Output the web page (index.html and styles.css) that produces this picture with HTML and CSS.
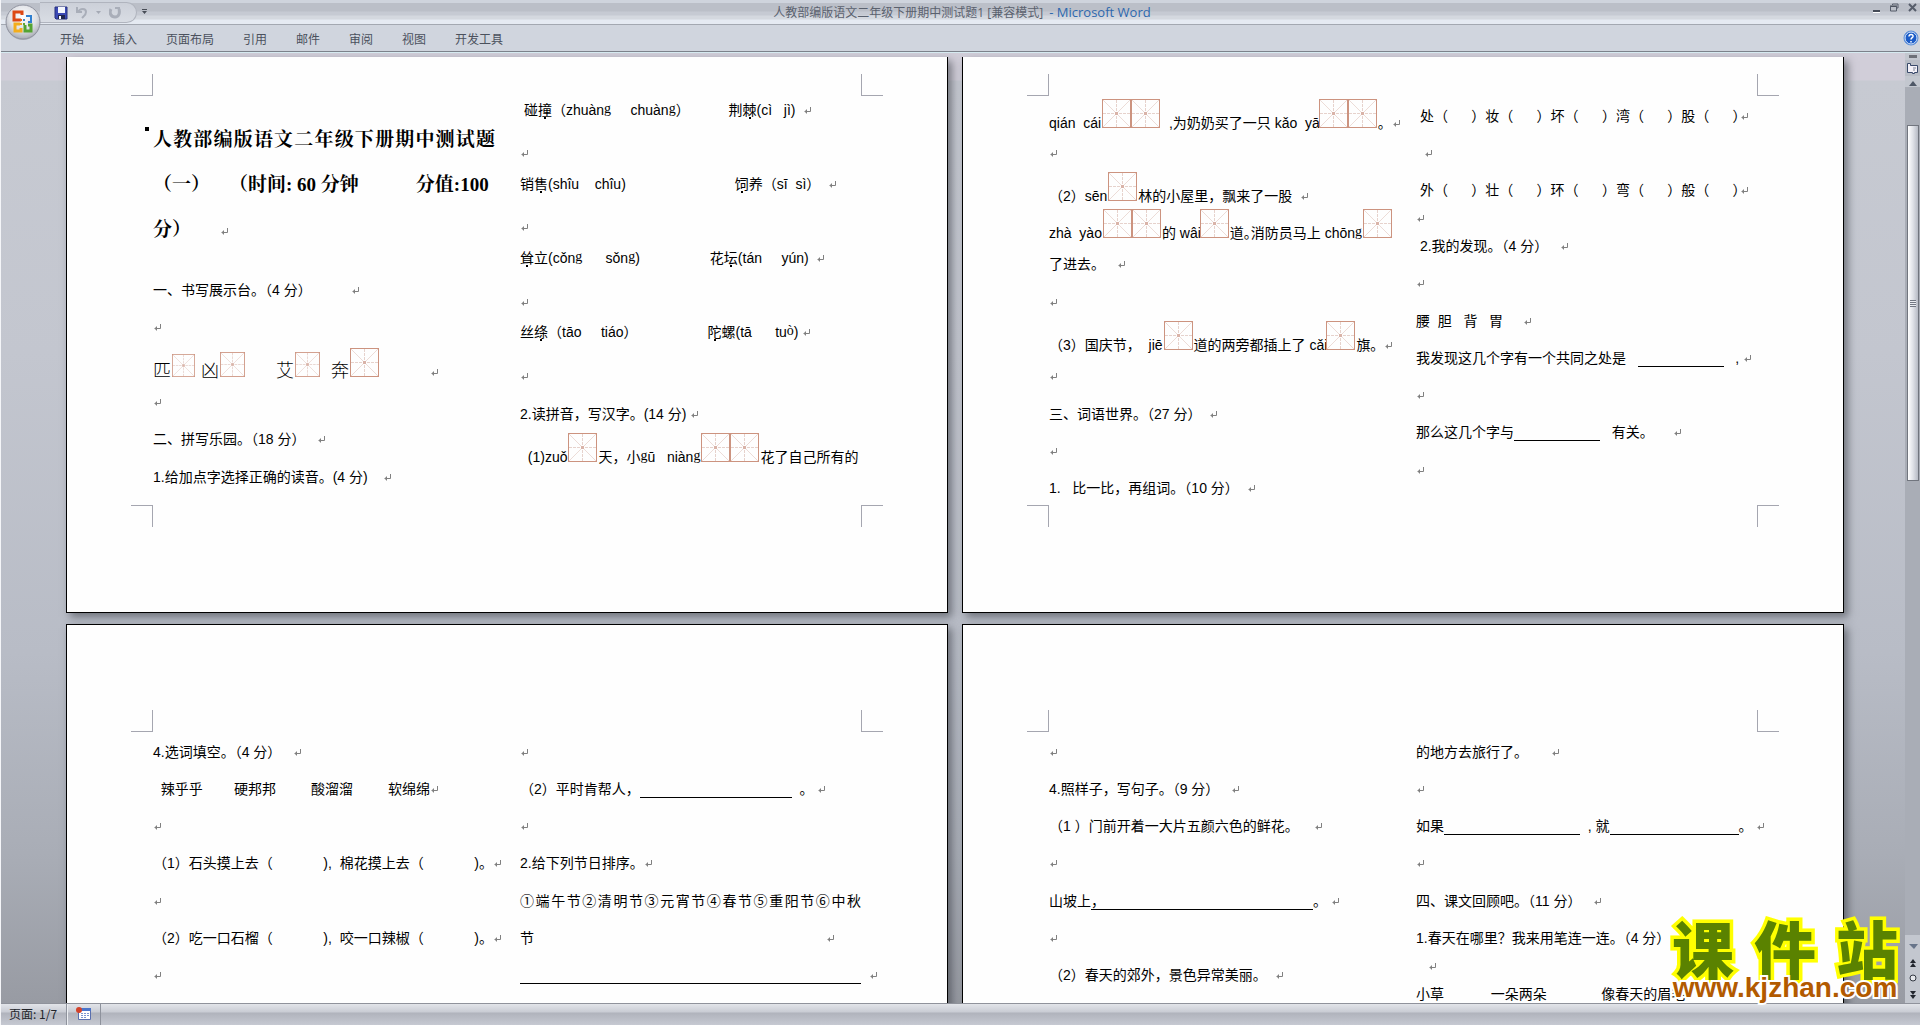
FILE: index.html
```html
<!DOCTYPE html>
<html lang="zh-CN">
<head>
<meta charset="utf-8">
<title>人教部编版语文二年级下册期中测试题1 [兼容模式] - Microsoft Word</title>
<link rel="stylesheet" href="styles.css">
</head>
<body>
<svg class="defs" aria-hidden="true">
  <symbol id="cr" viewBox="0 0 8 8"><path d="M7.500 0V4.500H1.500M3.500 2.500V6.500M2.500 3.500V5.500" fill="none" stroke="#808080"/></symbol>
  <symbol id="box" viewBox="0 0 29 29">
    <path d="M1 1L28 28M28 1L1 28" stroke="#ecdcd7" fill="none"/>
    <path d="M14.500 1V28M1 14.500H28" stroke="#e6d2cc" fill="none" stroke-dasharray="3 1"/>
    <rect x="13" y="13" width="3" height="3" fill="#d9b3a8"/>
    <rect x=".5" y=".5" width="28" height="28" fill="none" stroke="#cc937f"/>
  </symbol>
</svg>

<header class="titlebar">
  <div class="quick">
    <button class="q" aria-label="保存"><svg width="14" height="14" viewBox="0 0 14 14"><path d="M1 1h12v12H2l-1-1z" fill="#3b49b5" stroke="#27307f"/><path d="M4 1h7v6H4z" fill="#f3f6fd"/><path d="M4 9h7v4H4z" fill="#20264f"/><path d="M5 10h2v3H5z" fill="#fff"/></svg></button>
    <button class="q" aria-label="撤消"><svg width="12" height="12" viewBox="0 0 12 12"><path d="M1 0v5h5" fill="none" stroke="#a9aeb9" stroke-width="2"/><path d="M2 5c2-4 8-4 8 0 0 3-2 4-4 6" fill="none" stroke="#a9aeb9" stroke-width="2"/></svg></button>
    <button class="q small" aria-label="撤消列表"><svg width="5" height="3"><path d="M0 0h5L2.500 3z" fill="#a4a9b4"/></svg></button>
    <button class="q" aria-label="恢复"><svg width="12" height="12" viewBox="0 0 12 12"><path d="M2 2c-2 4 0 8 4 8s5-4 4-8" fill="none" stroke="#a9aeb9" stroke-width="3"/><path d="M6 0h5v5H9V2H6z" fill="#a9aeb9"/></svg></button>
  </div>
  <button class="q more" aria-label="自定义快速访问工具栏"><svg width="5" height="6"><path d="M0 0h5v1H0zM0 2h5L2.500 5z" fill="#484d57"/></svg></button>
  <div class="caption">人教部编版语文二年级下册期中测试题1 [兼容模式] <span class="app">- Microsoft Word</span></div>
  <div class="winbtns">
    <button class="q" aria-label="最小化"><svg width="8" height="10"><path d="M0 7h7v2H0z" fill="#454b57"/><path d="M0 9h7v1H0z" fill="#fff"/></svg></button>
    <button class="q" aria-label="还原"><svg width="9" height="10"><path d="M2.500 2V1H8v4H7M1 3.500h5.500V8H.5V3.500z" fill="none" stroke="#565d6b"/><path d="M0 3h7" stroke="#454b57"/></svg></button>
    <button class="q" aria-label="关闭"><svg width="10" height="10"><path d="M1 1l7 7M8 1L1 8" stroke="#565d6b" stroke-width="2"/></svg></button>
  </div>
  <button class="orb" aria-label="Office 按钮">
    <svg width="38" height="38" viewBox="0 0 38 38">
      <defs><radialGradient id="og" cx=".5" cy=".35" r=".65"><stop offset="0" stop-color="#fff"/><stop offset=".6" stop-color="#dfe1e6"/><stop offset="1" stop-color="#a9acb4"/></radialGradient></defs>
      <circle cx="19" cy="20" r="17" fill="#9699a1" opacity=".6"/>
      <circle cx="19" cy="19" r="17" fill="url(#og)" stroke="#9093a0"/>
      <g fill="none" stroke-width="3">
        <path d="M17 17h-7V9h8v3" stroke="#dd4814"/>
        <path d="M22 13h5v6h-3" stroke="#2f7fd0" stroke-width="2"/>
        <path d="M16 21h-5v7h6v-3" stroke="#f3ad1c"/>
        <path d="M21 22v6h6v-6h-3" stroke="#54a432"/>
      </g>
      <g fill="#e8631a"><rect x="16" y="16" width="2" height="2"/><rect x="19" y="16" width="2" height="2" fill="#3f88cf"/><rect x="16" y="20" width="2" height="2" fill="#e9a920"/><rect x="19" y="20" width="2" height="2" fill="#5fa53a"/></g>
    </svg>
  </button>
</header>

<nav class="tabs">
  <button>开始</button><button>插入</button><button>页面布局</button><button>引用</button><button>邮件</button><button>审阅</button><button>视图</button><button>开发工具</button>
  <button class="help" aria-label="帮助"><svg width="16" height="16" viewBox="0 0 16 16"><circle cx="8" cy="8" r="7" fill="#1c5cc7" stroke="#5b8fd9"/><circle cx="8" cy="8" r="6" fill="none" stroke="#dbe9fb"/><path d="M6 6.500c0-3 4.500-2.500 4 0-.3 1.200-2 1.200-2 3M8 11v1.500" fill="none" stroke="#fff" stroke-width="1.500"/></svg></button>
</nav>

<div class="work">
  <main class="desk">
    <article class="page first">
      <i class="crop tl"></i><i class="crop tr"></i><i class="crop bl"></i><i class="crop br"></i>
      <section>
        <h1><span class="fill">人教部编版语文二年级下册期中测试题</span><span>（一）    （时间: 60 分钟            分值:100</span><span>分）      <svg class="cr"><use href="#cr"/></svg></span></h1>
        <p class="h47"><span>一、书写展示台。（4 分）          <svg class="cr"><use href="#cr"/></svg></span></p>
        <p class="h37"><span><svg class="cr"><use href="#cr"/></svg></span></p>
        <p class="h44 big"><span>匹<svg class="box b23"><use href="#box"/></svg> 凶<svg class="box b25"><use href="#box"/></svg>      艾<svg class="box b25"><use href="#box"/></svg>  奔<svg class="box"><use href="#box"/></svg>          <svg class="cr"><use href="#cr"/></svg></span></p>
        <p class="h31"><span><svg class="cr"><use href="#cr"/></svg></span></p>
        <p class="h37"><span>二、拼写乐园。（18 分）   <svg class="cr"><use href="#cr"/></svg></span></p>
        <p class="h38"><span>1.给加点字选择正确的读音。(4 分)    <svg class="cr"><use href="#cr"/></svg></span></p>
      </section>
      <section>
        <p class="h24"><span> 碰<em>撞</em>（zhuàn<b>g</b>     chuàn<b>g</b>）          荆<em>棘</em>(cì   jì)  <svg class="cr"><use href="#cr"/></svg></span></p>
        <p class="h43"><span><svg class="cr"><use href="#cr"/></svg></span></p>
        <p class="h31"><span>销<em>售</em>(shîu    chîu)                            <em>饲</em>养（sī  sì）  <svg class="cr"><use href="#cr"/></svg></span></p>
        <p class="h43"><span><svg class="cr"><use href="#cr"/></svg></span></p>
        <p class="h31"><span><em>耸</em>立(cǒn<b>g</b>      sǒn<b>g</b>)                  花<em>坛</em>(tán     yún)  <svg class="cr"><use href="#cr"/></svg></span></p>
        <p class="h44"><span><svg class="cr"><use href="#cr"/></svg></span></p>
        <p class="h30"><span>丝<em>绦</em>（tāo     tiáo）                  <em>陀</em>螺(tā      tu<b>ò</b>) <svg class="cr"><use href="#cr"/></svg></span></p>
        <p class="h44"><span><svg class="cr"><use href="#cr"/></svg></span></p>
        <p class="h38"><span>2.读拼音，写汉字。(14 分) <svg class="cr"><use href="#cr"/></svg></span></p>
        <p class="h43"><span>  (1)zuǒ<svg class="box"><use href="#box"/></svg>天，小<b>g</b>ū   niàn<b>g</b><svg class="box"><use href="#box"/></svg><svg class="box"><use href="#box"/></svg>花了自己所有的</span></p>
      </section>
    </article>

    <article class="page first">
      <i class="crop tl"></i><i class="crop tr"></i><i class="crop bl"></i><i class="crop br"></i>
      <section>
        <p class="h37"><span>qián  cái<svg class="box"><use href="#box"/></svg><svg class="box"><use href="#box"/></svg>  ,为奶奶买了一只 kǎo  yā<svg class="box"><use href="#box"/></svg><svg class="box"><use href="#box"/></svg>。<svg class="cr"><use href="#cr"/></svg></span></p>
        <p class="h30"><span><svg class="cr"><use href="#cr"/></svg></span></p>
        <p class="h43"><span>（2）sēn<svg class="box"><use href="#box"/></svg>林的小屋里，飘来了一股  <svg class="cr"><use href="#cr"/></svg></span></p>
        <p class="h37"><span>zhà  yào<svg class="box"><use href="#box"/></svg><svg class="box"><use href="#box"/></svg>的 wâi<svg class="box"><use href="#box"/></svg>道<span class="tight">。</span>消防员马上 chōn<b>g</b><svg class="box"><use href="#box"/></svg></span></p>
        <p class="h31"><span>了进去。   <svg class="cr"><use href="#cr"/></svg></span></p>
        <p class="h38"><span><svg class="cr"><use href="#cr"/></svg></span></p>
        <p class="h43"><span>（3）国庆节，  jiē<svg class="box"><use href="#box"/></svg>道的两旁都插上了 cǎi<svg class="box"><use href="#box"/></svg>旗。<svg class="cr"><use href="#cr"/></svg></span></p>
        <p class="h31"><span><svg class="cr"><use href="#cr"/></svg></span></p>
        <p class="h38"><span>三、词语世界。（27 分）  <svg class="cr"><use href="#cr"/></svg></span></p>
        <p class="h37"><span><svg class="cr"><use href="#cr"/></svg></span></p>
        <p class="h37"><span>1.   比一比，再组词。（10 分）  <svg class="cr"><use href="#cr"/></svg></span></p>
      </section>
      <section>
        <p class="h30"><span> 处（      ）妆（      ）坏（      ）湾（      ）股（      <span class="tight">）</span><svg class="cr"><use href="#cr"/></svg></span></p>
        <p class="h37"><span>  <svg class="cr"><use href="#cr"/></svg></span></p>
        <p class="h37"><span> 外（      ）壮（      ）环（      ）弯（      ）般（      <span class="tight">）</span><svg class="cr"><use href="#cr"/></svg></span></p>
        <p class="h28"><span><svg class="cr"><use href="#cr"/></svg></span></p>
        <p class="h28"><span> 2.我的发现。（4 分）   <svg class="cr"><use href="#cr"/></svg></span></p>
        <p class="h37"><span><svg class="cr"><use href="#cr"/></svg></span></p>
        <p class="h38"><span>腰  胆   背   胃     <svg class="cr"><use href="#cr"/></svg></span></p>
        <p class="h37"><span>我发现这几个字有一个共同之处是   <span class="blank w86"></span>   , <svg class="cr"><use href="#cr"/></svg></span></p>
        <p class="h37"><span><svg class="cr"><use href="#cr"/></svg></span></p>
        <p class="h37"><span>那么这几个字与<span class="blank w86"></span>   有关。     <svg class="cr"><use href="#cr"/></svg></span></p>
        <p class="h38"><span><svg class="cr"><use href="#cr"/></svg></span></p>
      </section>
    </article>

    <article class="page">
      <i class="crop tl"></i><i class="crop tr"></i><i class="crop bl"></i><i class="crop br"></i>
      <section>
        <p class="h30"><span>4.选词填空。（4 分）   <svg class="cr"><use href="#cr"/></svg></span></p>
        <p class="h37"><span>  辣乎乎        硬邦邦         酸溜溜         软绵绵<svg class="cr"><use href="#cr"/></svg></span></p>
        <p class="h37"><span><svg class="cr"><use href="#cr"/></svg></span></p>
        <p class="h37"><span>（1）石头摸上去（             ),  棉花摸上去（             )。<svg class="cr"><use href="#cr"/></svg></span></p>
        <p class="h38"><span><svg class="cr"><use href="#cr"/></svg></span></p>
        <p class="h37"><span>（2）吃一口石榴（             ),  咬一口辣椒（             )。<svg class="cr"><use href="#cr"/></svg></span></p>
        <p class="h37"><span><svg class="cr"><use href="#cr"/></svg></span></p>
      </section>
      <section>
        <p class="h30"><span><svg class="cr"><use href="#cr"/></svg></span></p>
        <p class="h37"><span>（2）平时肯帮人，<span class="blank w152"></span>  。 <svg class="cr"><use href="#cr"/></svg></span></p>
        <p class="h37"><span><svg class="cr"><use href="#cr"/></svg></span></p>
        <p class="h37"><span>2.给下列节日排序。<svg class="cr"><use href="#cr"/></svg></span></p>
        <p class="h38"><span class="fill">①端午节②清明节③元宵节④春节⑤重阳节⑥中秋</span></p>
        <p class="h37"><span>节                                                                           <svg class="cr"><use href="#cr"/></svg></span></p>
        <p class="h37"><span><span class="blank w341"></span>  <svg class="cr"><use href="#cr"/></svg></span></p>
      </section>
    </article>

    <article class="page">
      <i class="crop tl"></i><i class="crop tr"></i><i class="crop bl"></i><i class="crop br"></i>
      <section>
        <p class="h30"><span><svg class="cr"><use href="#cr"/></svg></span></p>
        <p class="h37"><span>4.照样子，写句子。（9 分）   <svg class="cr"><use href="#cr"/></svg></span></p>
        <p class="h37"><span>（1 ）门前开着一大片五颜六色的鲜花。    <svg class="cr"><use href="#cr"/></svg></span></p>
        <p class="h37"><span><svg class="cr"><use href="#cr"/></svg></span></p>
        <p class="h38"><span>山坡上<span class="blank w222">，</span>。 <svg class="cr"><use href="#cr"/></svg></span></p>
        <p class="h37"><span><svg class="cr"><use href="#cr"/></svg></span></p>
        <p class="h37"><span>（2）春天的郊外，景色异常美丽。  <svg class="cr"><use href="#cr"/></svg></span></p>
      </section>
      <section>
        <p class="h30"><span>的地方去旅行了。      <svg class="cr"><use href="#cr"/></svg></span></p>
        <p class="h37"><span><svg class="cr"><use href="#cr"/></svg></span></p>
        <p class="h37"><span>如果<span class="blank w136"></span>  , 就<span class="blank w129"></span>。 <svg class="cr"><use href="#cr"/></svg></span></p>
        <p class="h37"><span><svg class="cr"><use href="#cr"/></svg></span></p>
        <p class="h38"><span>四、课文回顾吧。（11 分）   <svg class="cr"><use href="#cr"/></svg></span></p>
        <p class="h37"><span>1.春天在哪里？我来用笔连一连。（4 分）</span></p>
        <p class="h28"><span>   <svg class="cr"><use href="#cr"/></svg></span></p>
        <p class="h28"><span>小草            一朵两朵              像春天的眉毛</span></p>
      </section>
    </article>
  </main>

  <aside class="scroll">
    <svg class="top" width="15" height="34" viewBox="0 0 15 34">
      <rect x="4" y="2" width="8" height="3" fill="#6d7078"/>
      <path d="M0 7h15v16H0z" fill="#b9bdc6"/>
      <path d="M2.500 10.500h3v2h7v7h-3v1h-2v-1h-5z" fill="#f4f1f8" stroke="#39496a"/><path d="M8 15h3M8 17h2" stroke="#7c8598"/>
      <path d="M4 33l4-5 4 5z" fill="#4e5766"/>
    </svg>
    <div class="track"><div class="thumb"><i></i></div></div>
    <svg class="bottom" width="15" height="68" viewBox="0 0 15 68">
      <path d="M4 9h9l-4 5z" fill="#68758a"/>
      <path d="M0 18h15v50H0z" fill="#c3c7cf"/>
      <g fill="#22262e"><path d="M5 28l3-4 3 4zM5 32l3-4 3 4zM5 56h6l-3 4zM5 60h6l-3 4z"/></g>
      <circle cx="8" cy="43" r="3" fill="#e6e8ec" stroke="#333842"/>
    </svg>
  </aside>

  <div class="mark">
    <div class="name"><span>课</span><span>件</span><span>站</span></div>
    <div class="url">www.kjzhan.com</div>
  </div>
</div>

<footer class="status">
  <span class="cell">页面: 1/7</span>
  <button class="cell icon" aria-label="录制宏"><svg width="15" height="13" viewBox="0 0 15 13"><path d="M2.500 1.500h12v11h-12z" fill="#fff" stroke="#5a6fae"/><path d="M2 1h13v3H2z" fill="#4b74c9"/><path d="M5 6h2v1H5zM8 6h2v1H8zM11 6h2v1h-2zM5 8h2v1H5zM8 8h2v1H8zM11 8h2v1h-2zM5 10h2v1H5zM8 10h2v1H8z" fill="#7c96cf"/><circle cx="3" cy="3" r="3" fill="#d2432c"/></svg></button>
</footer>
</body>
</html>
```
FILE: styles.css
```css
* { box-sizing: border-box; }
html, body { height: 100%; }
body {
  margin: 0;
  display: flex;
  flex-direction: column;
  overflow: hidden;
  border-left: 1px solid #f4f5f8;
  background: #c6c9d2;
  font-family: "Liberation Sans", "Noto Sans CJK SC", sans-serif;
  font-size: 14px;
  color: #000;
}
.defs { display: none; }
button {
  margin: 0;
  padding: 0;
  border: 0;
  background: none;
  font: inherit;
  color: inherit;
}
svg { display: inline-block; }

/* title bar */
.titlebar {
  position: relative;
  flex: none;
  display: flex;
  align-items: flex-start;
  height: 25px;
  padding-left: 39px;
  border-bottom: 1px solid #a3a8b1;
  background: linear-gradient(#cfd4dd 0 3px, #bbbfc8 3px 11px, #c6cad3 12px 15px, #d4d8df 16px 19px, #e5eaf2 20px);
}
.quick {
  display: flex;
  align-items: center;
  gap: 8px;
  width: 97px;
  height: 21px;
  margin-top: 2px;
  padding-left: 14px;
  border: 1px solid #b0b4be;
  border-left: 0;
  border-radius: 0 11px 11px 0;
  background: linear-gradient(#ccd0d9, #d9dde4);
}
.q { display: flex; height: 16px; align-items: center; }
.more { margin: 4px 0 0 5px; }
.caption {
  flex: 1;
  text-align: center;
  padding-right: 96px;
  font: 12px/24px "Open Sans", "Noto Sans CJK SC", sans-serif;
  color: #5a616e;
}
.app { color: #2d68ae; padding-left: 3px; font-size: 13px; }
.winbtns { display: flex; gap: 9px; padding: 0 2px 0 0; }
.orb { position: absolute; left: 3px; top: 3px; z-index: 2; height: 38px; }

/* ribbon tabs */
.tabs {
  flex: none;
  display: flex;
  align-items: center;
  gap: 29px;
  height: 27px;
  padding-left: 59px;
  background: #d0d5de;
  border-bottom: 1px solid #7c828b;
  font-family: "Noto Sans CJK SC", sans-serif;
  font-size: 12px;
  color: #4b515d;
}
.help { margin-left: auto; padding-right: 1px; display: flex; }

/* work area */
.work {
  position: relative;
  flex: 1;
  min-height: 0;
  display: flex;
  border-top: 1px solid #d6eaf0;
  background: linear-gradient(#d1ced9 0 27px, #c7cad2 28px, #c3c6cf 300px, #b8bcc6 600px, #a9adb6 800px, #989ba3);
}
.desk {
  flex: 1;
  display: grid;
  grid-template-columns: 882px 882px;
  grid-auto-rows: max-content;
  justify-content: center;
  gap: 11px 14px;
  padding: 4px 0 0 4px;
  overflow: hidden;
}
.page {
  position: relative;
  display: grid;
  grid-template-columns: 342px 341px;
  align-content: start;
  gap: 25px;
  height: 625px;
  padding: 106px 86px 0 86px;
  border: 1px solid #000;
  background: #fefefe;
  box-shadow: 4px 4px 8px rgba(50, 52, 60, .55);
}
.page.first { height: 556px; padding-top: 38px; border-top: 0; }

/* margin marks at the corners of the text area */
.crop { position: absolute; width: 22px; height: 22px; border: 0 solid #a5a6b0; }
.tl { left: 64px; top: 85px; border-width: 0 1px 1px 0; }
.tr { right: 64px; top: 85px; border-width: 0 0 1px 1px; }
.bl { left: 64px; bottom: 85px; border-width: 1px 1px 0 0; }
.br { right: 64px; bottom: 85px; border-width: 1px 0 0 1px; }
.first .tl, .first .tr { top: 17px; }

/* document text */
h1 {
  position: relative;
  margin: 0;
  padding-top: 22px;
  font-family: "Liberation Serif", "Noto Serif CJK SC", "Noto Sans CJK SC", serif;
  font-size: 19px;
  font-weight: 700;
  line-height: 45px;
}
h1::before { content: ""; position: absolute; left: -8px; top: 32px; width: 4px; height: 4px; background: #000; }
h1 span { display: block; white-space: pre; }
p { display: flex; align-items: flex-end; margin: 0; white-space: pre; line-height: 18px; }
.fill { width: 100%; white-space: normal; text-align: justify; text-align-last: justify; }
.big { font-size: 18px; font-weight: 300; }
em { position: relative; font-style: normal; }
em::after { content: ""; position: absolute; left: 6px; bottom: -1px; width: 2px; height: 2px; background: #000; }
b { font: 14px/14px "Liberation Serif", serif; vertical-align: 2px; }
.cr { width: 8px; height: 8px; }
.box { width: 29px; height: 29px; margin: 0 1px; vertical-align: baseline; }
.box + .box { margin-left: -1px; }
.big .box { margin-left: 1px; }
.b23 { width: 23px; height: 23px; }
.b25 { width: 25px; height: 25px; }
.tight { font-feature-settings: "halt"; }
.blank { display: inline-block; height: 18px; border-bottom: 1px solid #000; vertical-align: bottom; }
.w86 { width: 86px; }
.w129 { width: 129px; }
.w136 { width: 136px; }
.w152 { width: 152px; }
.w222 { width: 222px; }
.w341 { width: 341px; }
.h24 { height: 24px; }
.h28 { height: 28px; }
.h30 { height: 30px; }
.h31 { height: 31px; }
.h37 { height: 37px; }
.h38 { height: 38px; }
.h43 { height: 43px; }
.h44 { height: 44px; }
.h47 { height: 47px; }

/* scroll bar */
.scroll { flex: none; display: flex; flex-direction: column; width: 15px; background: #c3c7cf; }
.scroll svg { display: block; flex: none; }
.track { flex: 1; padding: 38px 1px 0 2px; background: #a9adb6; }
.thumb {
  display: flex;
  align-items: center;
  justify-content: center;
  height: 44%;
  border: 1px solid #71757e;
  background: linear-gradient(90deg, #fff, #dfe1e7 50%, #b6bac4);
}
.thumb i { width: 6px; height: 7px; background: repeating-linear-gradient(#737883 0 1px, #eceef2 1px 2px); }

/* site mark laid over the document */
.mark { position: absolute; right: 22px; bottom: 0; width: 226px; white-space: nowrap; }
.name {
  display: flex;
  justify-content: space-between;
  font: 900 62px/52px "Noto Sans CJK SC", sans-serif;
  color: #5a8200;
  -webkit-text-stroke: 7px #ffff00;
  paint-order: stroke fill;
}
.url {
  font: bold 28px/30px "Liberation Sans", sans-serif;
  text-align: center;
  color: #b25a00;
  -webkit-text-stroke: 4px #fff;
  paint-order: stroke fill;
}

/* status bar */
.status {
  flex: none;
  display: flex;
  height: 22px;
  border-top: 1px solid #8f929b;
  background: linear-gradient(#e2e4e9, #c9ccd4 8px, #b0b3bc 9px, #c6c9d2);
  font: 12px/20px "Noto Sans CJK SC", sans-serif;
  color: #22252b;
}
.cell { display: flex; align-items: center; padding: 0 9px 2px 8px; border-right: 1px solid #8e929c; }
.icon { border-left: 1px solid #eceef2; }
```
